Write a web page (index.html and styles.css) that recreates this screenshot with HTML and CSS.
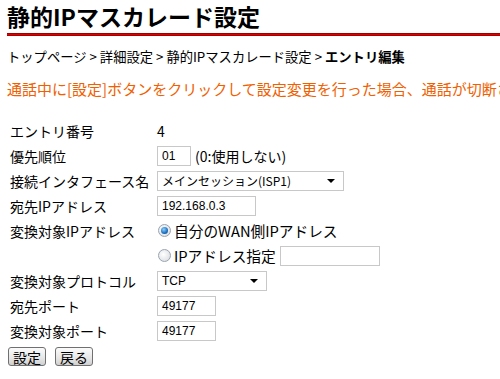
FILE: index.html
```html
<!DOCTYPE html>
<html lang="ja">
<head>
<meta charset="utf-8">
<link rel="stylesheet" href="styles.css">
</head>
<body>
<div class="page">
  <h1 class="title">静的IPマスカレード設定</h1>
  <div class="rule"></div>
  <div class="crumbs">トップページ &gt; 詳細設定 &gt; 静的IPマスカレード設定 &gt; <b>エントリ編集</b></div>
  <div class="warn">通話中に[設定]ボタンをクリックして設定変更を行った場合、通話が切断さ</div>
  <div class="form">
    <div class="label">エントリ番号</div>
    <div class="value">4</div>

    <div class="label">優先順位</div>
    <div class="value"><span class="input w-prio">01</span><span class="note">(0:使用しない)</span></div>

    <div class="label">接続インタフェース名</div>
    <div class="value"><span class="select w-if"><span class="sel-text">メインセッション(ISP1)</span><span class="arrow"></span></span></div>

    <div class="label">宛先IPアドレス</div>
    <div class="value"><span class="input w-ip">192.168.0.3</span></div>

    <div class="label">変換対象IPアドレス</div>
    <div class="value radio-row"><span class="radio on"></span>自分のWAN側IPアドレス</div>

    <div class="label"></div>
    <div class="value radio-row"><span class="radio"></span>IPアドレス指定<span class="input w-ip2"></span></div>

    <div class="label">変換対象プロトコル</div>
    <div class="value"><span class="select w-proto"><span class="sel-text">TCP</span><span class="arrow"></span></span></div>

    <div class="label">宛先ポート</div>
    <div class="value"><span class="input w-port">49177</span></div>

    <div class="label">変換対象ポート</div>
    <div class="value"><span class="input w-port">49177</span></div>
  </div>
  <div class="buttons">
    <span class="btn">設定</span>
    <span class="btn">戻る</span>
  </div>
</div>
</body>
</html>
```
FILE: styles.css
```css
html, body {
  margin: 0;
  padding: 0;
  background: #fff;
  width: 500px;
  height: 379px;
  overflow: hidden;
}
.page {
  font-family: "Noto Sans CJK JP", "Liberation Sans", sans-serif;
  color: #000;
  padding: 0 0 0 7px;
}
.title {
  margin: 0;
  padding-top: 2px;
  font-size: 23px;
  line-height: 28px;
  font-weight: bold;
  white-space: nowrap;
}
.rule {
  margin-top: 3px;
  height: 3px;
  background: linear-gradient(#7a0000, #e00000 50%, #8a0000);
}
.crumbs {
  margin-top: 12px;
  font-size: 13.3px;
  line-height: 18px;
  white-space: nowrap;
}
.crumbs b { font-weight: bold; }
.warn {
  margin-top: 14px;
  color: #f06000;
  font-size: 15px;
  line-height: 18px;
  white-space: nowrap;
  overflow: hidden;
}
.form {
  margin-top: 20px;
  padding-left: 3px;
  display: grid;
  grid-template-columns: 147px 1fr;
  grid-auto-rows: 25px;
  font-size: 14px;
}
.label, .value {
  display: flex;
  align-items: center;
  white-space: nowrap;
}
.input {
  box-sizing: border-box;
  display: inline-flex;
  align-items: center;
  height: 20px;
  border: 1px solid #c8c8c8;
  padding: 0 4px;
  font-family: "Liberation Sans", sans-serif;
  font-size: 12px;
  background: #fff;
}
.w-prio { width: 34px; }
.w-ip { width: 99px; }
.w-ip2 { width: 100px; margin-left: 4px; }
.w-port { width: 59px; }
.note { margin-left: 4px; font-size: 14px; }
.select {
  box-sizing: border-box;
  display: inline-flex;
  align-items: center;
  justify-content: space-between;
  height: 20px;
  border: 1px solid #c8c8c8;
  padding: 0 8px 0 4px;
  font-size: 12px;
  background: #fff;
}
.select .sel-text { font-family: "Noto Sans CJK JP", "Liberation Sans", sans-serif; }
.w-proto .sel-text { font-family: "Liberation Sans", sans-serif; }
.w-if { width: 187px; }
.w-proto { width: 110px; }
.arrow {
  width: 0;
  height: 0;
  border-left: 4px solid transparent;
  border-right: 4px solid transparent;
  border-top: 4px solid #000;
}
.radio-row { padding-left: 1px; font-size: 14.7px; }
.radio {
  box-sizing: border-box;
  width: 13px;
  height: 13px;
  border-radius: 50%;
  border: 1px solid #9aa4b0;
  background: radial-gradient(circle at 40% 40%, #ffffff, #d4d8dc);
  margin-right: 3px;
  position: relative;
}
.radio.on::after {
  content: "";
  position: absolute;
  left: 2px;
  top: 2px;
  width: 7px;
  height: 7px;
  border-radius: 50%;
  background: radial-gradient(circle at 40% 35%, #8fd0ff, #1a6fc0 60%, #0a3f80);
}
.buttons {
  margin-top: 4px;
  display: flex;
  gap: 9px;
  padding-left: 1px;
}
.btn {
  box-sizing: border-box;
  display: inline-flex;
  align-items: center;
  justify-content: center;
  height: 19px;
  padding: 0 4px;
  border: 1px solid #707070;
  border-radius: 3px;
  background: linear-gradient(#fbfbfb, #e6e6e6 60%, #d0d0d0);
  font-size: 14px;
  line-height: 1;
}
```
